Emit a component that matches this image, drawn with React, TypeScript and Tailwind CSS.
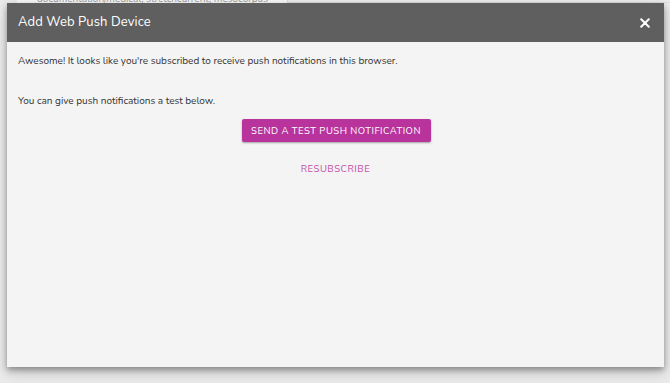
import React from "react";

export default function App() {
  return (
    <div
      className="relative w-[670px] h-[383px] overflow-hidden bg-[#ebebeb]"
      style={{ fontFamily: "Nunito, Lato, 'Open Sans', sans-serif" }}
    >
      {/* background page peeking through */}
      <div className="absolute left-[17px] top-[-6px] w-[271px] h-[12px] bg-[#f7f7f7] border-r border-[#dcdcdc]">
        <div className="pl-[20px] text-[10px] leading-[10px] text-[#9a9a9a] whitespace-nowrap">
          documentation/medical, stretchcurrent, mesocorpus
        </div>
      </div>
      <div className="absolute left-[288px] top-[2px] w-[382px] h-px bg-[#dedede]" />

      {/* modal */}
      <div className="absolute left-[7px] top-[3px] w-[657px] h-[364px] bg-[#f4f4f4] shadow-[0_3px_6px_rgba(0,0,0,0.35),0_6px_14px_rgba(0,0,0,0.15)] flex flex-col">
        <div className="h-[39px] bg-[#5f5f5f] flex items-center justify-between pl-[11px] pr-[14px] shrink-0">
          <span className="text-white text-[13px] tracking-[0.1px]">Add Web Push Device</span>
          <svg width="10" height="10" viewBox="0 0 10 10" className="mt-[1px]">
            <path d="M1.2 1.2 L8.8 8.8 M8.8 1.2 L1.2 8.8" stroke="white" strokeWidth="2" strokeLinecap="round" />
          </svg>
        </div>
        <div className="flex flex-col px-[11px] pt-[12px] text-[#333] text-[10px] leading-[14px]">
          <p>Awesome! It looks like you're subscribed to receive push notifications in this browser.</p>
          <p className="mt-[26px]">You can give push notifications a test below.</p>
          <div className="flex flex-col items-center mt-[11px]">
            <button className="h-[23px] w-[189px] rounded-[2px] bg-[#b8339c] text-white text-[9.5px] tracking-[0.5px] whitespace-nowrap shadow-[0_1px_2px_rgba(0,0,0,0.35)] ml-[1px]">
              SEND A TEST PUSH NOTIFICATION
            </button>
            <span className="mt-[20px] text-[9.5px] tracking-[0.5px] text-[#c44ea9]">RESUBSCRIBE</span>
          </div>
        </div>
      </div>
    </div>
  );
}
